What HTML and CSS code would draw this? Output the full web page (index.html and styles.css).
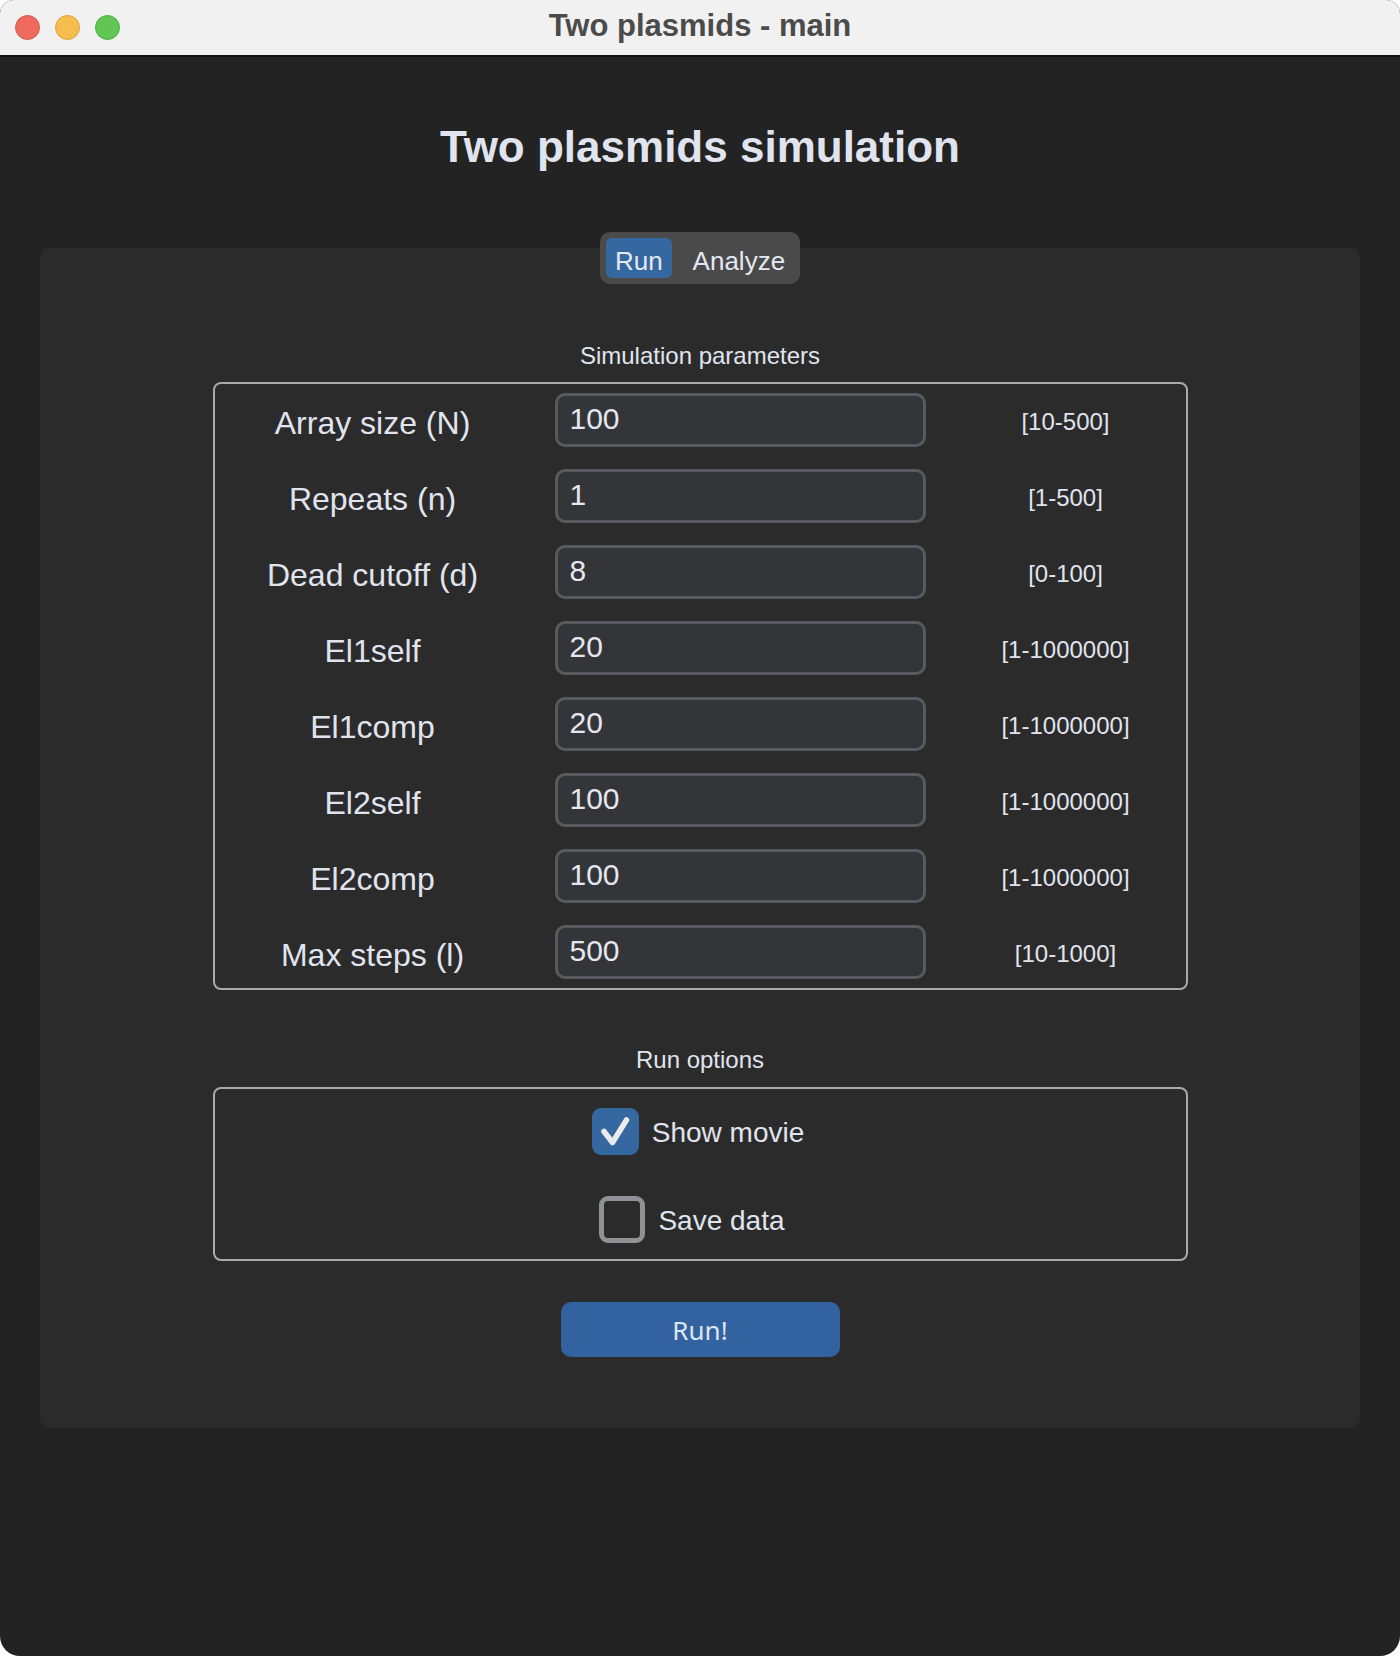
FILE: index.html
```html
<!DOCTYPE html>
<html>
<head>
<meta charset="utf-8">
<title>Two plasmids - main</title>
<link rel="stylesheet" href="styles.css">
</head>
<body>
<div class="window">
  <div class="titlebar">
    <div class="lights">
      <span class="light red"></span>
      <span class="light yellow"></span>
      <span class="light green"></span>
    </div>
    <div class="wintitle">Two plasmids - main</div>
    <div class="spacer"></div>
  </div>
  <div class="content">
    <h1 class="apptitle">Two plasmids simulation</h1>
    <div class="tabs">
      <span class="tab active">Run</span>
      <span class="tab">Analyze</span>
    </div>
    <div class="panel">
      <div class="section-title">Simulation parameters</div>
      <div class="params">
        <div class="row"><label class="lbl">Array size (N)</label><input class="field" value="100"><span class="range">[10-500]</span></div>
        <div class="row"><label class="lbl">Repeats (n)</label><input class="field" value="1"><span class="range">[1-500]</span></div>
        <div class="row"><label class="lbl">Dead cutoff (d)</label><input class="field" value="8"><span class="range">[0-100]</span></div>
        <div class="row"><label class="lbl">El1self</label><input class="field" value="20"><span class="range">[1-1000000]</span></div>
        <div class="row"><label class="lbl">El1comp</label><input class="field" value="20"><span class="range">[1-1000000]</span></div>
        <div class="row"><label class="lbl">El2self</label><input class="field" value="100"><span class="range">[1-1000000]</span></div>
        <div class="row"><label class="lbl">El2comp</label><input class="field" value="100"><span class="range">[1-1000000]</span></div>
        <div class="row"><label class="lbl">Max steps (l)</label><input class="field" value="500"><span class="range">[10-1000]</span></div>
      </div>
      <div class="section-title second">Run options</div>
      <div class="options">
        <div class="opt opt-first">
          <span class="cb checked"><svg width="47" height="47" viewBox="0 0 47 47"><path d="M12 23.5 L20.5 34.5 L34.5 12" fill="none" stroke="#ebebeb" stroke-width="5.5" stroke-linecap="round" stroke-linejoin="round"/></svg></span>
          <span class="optlabel">Show movie</span>
        </div>
        <div class="opt opt-second">
          <span class="cb"></span>
          <span class="optlabel">Save data</span>
        </div>
      </div>
      <button class="runbtn">Run!</button>
    </div>
  </div>
</div>
</body>
</html>
```
FILE: styles.css
```css
html, body {
  margin: 0;
  padding: 0;
  background: #ffffff;
}
body {
  font-family: "Liberation Sans", Arial, sans-serif;
}
.window {
  width: 1400px;
  height: 1656px;
  background: #232323;
  border-radius: 14px 14px 20px 20px;
  overflow: hidden;
  display: flex;
  flex-direction: column;
}
.titlebar {
  height: 55px;
  background: #f1f1f1;
  border-bottom: 2px solid #111111;
  display: grid;
  grid-template-columns: 1fr auto 1fr;
  align-items: center;
  flex-shrink: 0;
}
.lights {
  display: flex;
  gap: 15px;
  padding-left: 15px;
}
.light {
  width: 25px;
  height: 25px;
  border-radius: 50%;
  box-sizing: border-box;
}
.red { background: #ee6a5f; border: 1px solid #d8574c; }
.yellow { background: #f5be4f; border: 1px solid #dca33a; }
.green { background: #62c655; border: 1px solid #4eae42; }
.wintitle {
  font-weight: bold;
  font-size: 31px;
  color: #4b4b4b;
  line-height: 34px;
  padding-bottom: 4px;
}
.content {
  display: flex;
  flex-direction: column;
  align-items: center;
  color: #e0e4ee;
}
.apptitle {
  margin: 64px 0 0 0;
  font-size: 44px;
  line-height: 52px;
  font-weight: bold;
  color: #e0e4ee;
}
.tabs {
  margin-top: 59px;
  display: flex;
  gap: 12px;
  padding: 6px;
  background: #4a4a4a;
  border-radius: 10px;
  position: relative;
  z-index: 1;
}
.tab {
  height: 40px;
  line-height: 40px;
  padding: 3px 9px 0 9px;
  box-sizing: border-box;
  font-size: 26px;
  color: #e4e8f2;
  border-radius: 6px;
}
.tab.active {
  background: #3567a0;
}
.panel {
  margin-top: -36px;
  width: 1320px;
  background: #2b2b2b;
  border-radius: 10px;
  padding: 93px 0 71px 0;
  box-sizing: border-box;
  display: flex;
  flex-direction: column;
  align-items: center;
}
.section-title {
  font-size: 24px;
  line-height: 30px;
  text-align: center;
  margin-bottom: 11px;
}
.section-title.second {
  margin-top: 55px;
  margin-bottom: 12px;
}
.params {
  width: 975px;
  box-sizing: border-box;
  border: 2px solid #a9a9a9;
  border-radius: 8px;
  display: flex;
  flex-direction: column;
  gap: 4px;
}
.row {
  height: 72px;
  display: grid;
  grid-template-columns: 340px 371px 1fr;
  align-items: center;
}
.lbl {
  font-size: 32px;
  text-align: center;
  padding-right: 24px;
  padding-top: 7px;
}
.field {
  width: 371px;
  height: 54px;
  box-sizing: border-box;
  border: 3px solid #575b60;
  border-radius: 10px;
  background: #343538;
  color: #e4e7ef;
  font-family: "Liberation Sans", Arial, sans-serif;
  font-size: 30px;
  padding: 0 0 3px 12px;
  outline: none;
}
.range {
  font-size: 24px;
  text-align: center;
  padding-left: 20px;
  padding-top: 4px;
}
.options {
  width: 975px;
  box-sizing: border-box;
  border: 2px solid #a9a9a9;
  border-radius: 8px;
  padding: 19px 0 16px 0;
  display: flex;
  flex-direction: column;
  gap: 41px;
}
.opt {
  height: 47px;
  display: flex;
  justify-content: center;
  align-items: center;
  gap: 13px;
}
.opt-first {
  padding-right: 4px;
}
.opt-second {
  padding-right: 16px;
}
.cb {
  width: 46px;
  height: 47px;
  box-sizing: border-box;
  border: 5px solid #8e9196;
  border-radius: 9px;
  display: block;
}
.cb.checked {
  width: 47px;
  border: none;
  background: #3567a0;
}
.cb svg {
  display: block;
}
.optlabel {
  font-size: 28px;
  color: #e0e4ee;
  padding-top: 2px;
}
.runbtn {
  margin-top: 41px;
  width: 279px;
  height: 55px;
  border: none;
  border-radius: 10px;
  background: #3362a1;
  color: #dde4f0;
  font-family: "Noto Sans", "Liberation Sans", sans-serif;
  font-size: 26px;
  padding: 0;
}
```
